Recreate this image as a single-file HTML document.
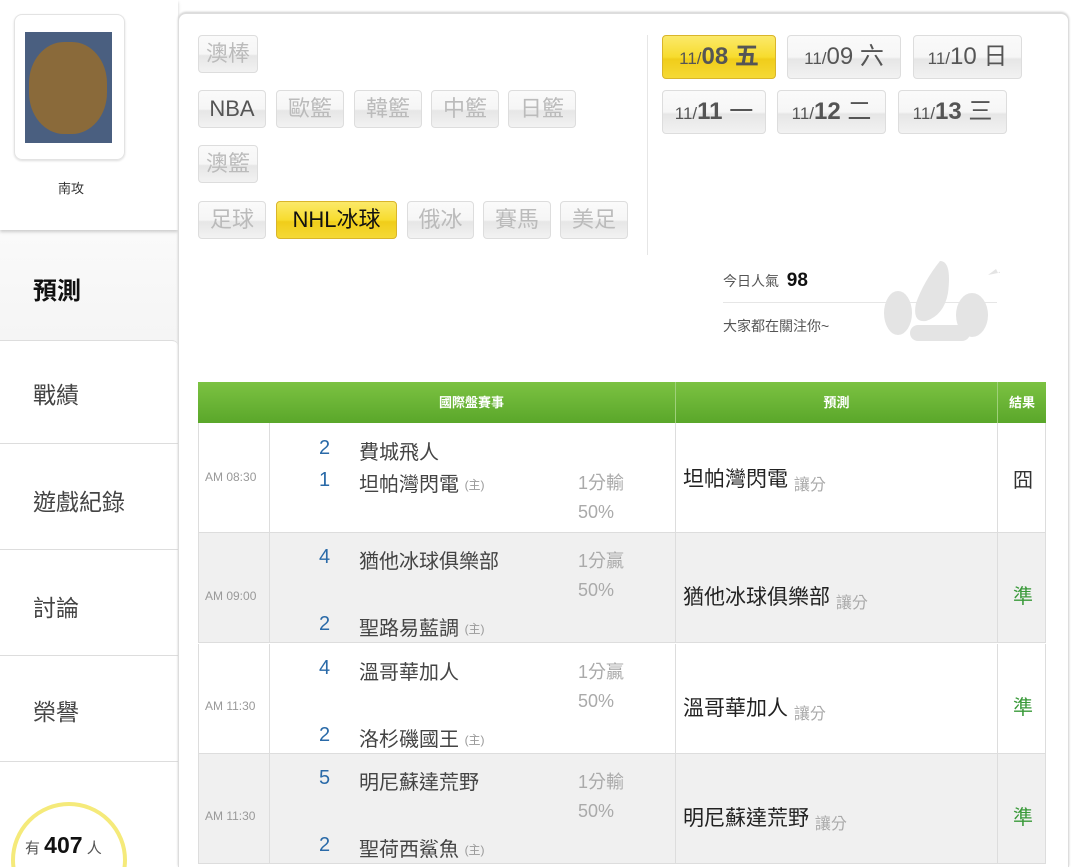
<!DOCTYPE html><html><head><meta charset="utf-8"><style>
*{box-sizing:border-box;margin:0;padding:0}
body{width:1080px;height:867px;overflow:hidden;background:#fff;font-family:"Liberation Sans","Noto Sans CJK TC",sans-serif;position:relative;color:#333}
.a{position:absolute}
.btn{position:absolute;height:38px;border:1px solid #ddd;border-radius:4px;background:linear-gradient(#fafafa,#f6f6f6 50%,#e6e6e6 55%,#f2f2f2);color:#bbb;font-size:22px;line-height:36px;text-align:center;white-space:nowrap}
.on{background:linear-gradient(#fbe96a,#f7dc2e 50%,#f0cd1a 55%,#f5d935);border-color:#d9b52a;color:#111}
.dt{height:44px;line-height:42px;color:#555;font-size:24px}
.dt small{font-size:17px}
.side{position:absolute;left:0;width:178px;background:#fff;border-bottom:1px solid #ddd;font-size:23px;color:#444;padding-left:33px}
.row{position:absolute;left:198px;width:848px;height:110px;border-bottom:1px solid #ddd;border-left:1px solid #ddd;border-right:1px solid #ddd}
.row div{position:absolute;white-space:nowrap}
.g{background:#f0f0f0}
.n{color:#2a6aa8;font-size:20px;left:120px}
.t{font-size:20px;color:#444;left:160px}
.o{font-size:18px;color:#aaa;left:379px}
.h{font-size:12px;color:#999;position:relative;top:-2px}
.tm{left:6px;font-size:12px;color:#999}
.p{left:484px;font-size:21px;color:#222}
.p span{font-size:16px;color:#aaa;position:relative;top:4px}
.r{left:814px;font-size:20px;color:#3a9a3a}
.vl{position:absolute;top:0;bottom:0;width:1px;background:#ddd}
</style></head><body>
<div class="a" style="left:0;top:230px;width:178px;height:637px;background:linear-gradient(#fafafa,#eee 40%,#f3f3f3)"></div>
<div class="a" style="left:0;top:0;width:178px;height:230px;background:#fff;box-shadow:0 2px 3px #ccc"></div>
<div class="a" style="left:14px;top:14px;width:111px;height:146px;border:1px solid #e3e3e3;border-radius:8px;box-shadow:0 1px 2px #ddd"></div>
<div class="a" style="left:25px;top:32px;width:87px;height:111px;background:#4a5f80;overflow:hidden"><div class="a" style="left:4px;top:10px;width:78px;height:92px;border-radius:45%;background:#8a6a3a"></div></div>
<div class="a" style="left:58px;top:178px;font-size:13px;color:#333">南攻</div>
<div class="a" style="left:33px;top:271px;font-size:24px;font-weight:bold;color:#111">預測</div>
<div class="side" style="top:340px;height:104px;padding-top:35px;border-top:1px solid #ddd;border-radius:0 6px 0 0">戰績</div>
<div class="side" style="top:444px;height:106px;padding-top:39px">遊戲紀錄</div>
<div class="side" style="top:550px;height:106px;padding-top:39px">討論</div>
<div class="side" style="top:656px;height:106px;padding-top:37px">榮譽</div>
<div class="side" style="top:762px;height:105px;border:none;overflow:hidden;padding:0">
<div class="a" style="left:11px;top:40px;width:116px;height:116px;border:4px solid #f5ea7a;border-radius:50%"></div>
<div class="a" style="left:25px;top:70px;font-size:15px;color:#555;white-space:nowrap">有 <b style="font-size:23px;color:#111">407</b> 人</div></div>

<div class="a" style="left:178px;top:13px;width:891px;height:854px;border:1px solid #ddd;border-bottom:none;border-radius:8px 8px 0 0;box-shadow:0 -1px 2px #ccc;background:#fff"></div>
<div class="a" style="left:647px;top:35px;width:1px;height:220px;background:#e6e6e6"></div>

<div class="btn" style="left:198px;top:35px;width:60px">澳棒</div>
<div class="btn" style="left:198px;top:90px;width:68px;color:#555">NBA</div>
<div class="btn" style="left:276px;top:90px;width:68px">歐籃</div>
<div class="btn" style="left:354px;top:90px;width:68px">韓籃</div>
<div class="btn" style="left:431px;top:90px;width:68px">中籃</div>
<div class="btn" style="left:508px;top:90px;width:68px">日籃</div>
<div class="btn" style="left:198px;top:145px;width:60px">澳籃</div>
<div class="btn" style="left:198px;top:201px;width:68px">足球</div>
<div class="btn on" style="left:276px;top:201px;width:121px">NHL冰球</div>
<div class="btn" style="left:407px;top:201px;width:67px">俄冰</div>
<div class="btn" style="left:483px;top:201px;width:68px">賽馬</div>
<div class="btn" style="left:560px;top:201px;width:68px">美足</div>

<div class="btn dt on" style="left:662px;top:35px;width:114px"><small>11/</small><b>08</b> <b>五</b></div>
<div class="btn dt" style="left:787px;top:35px;width:114px"><small>11/</small>09 六</div>
<div class="btn dt" style="left:913px;top:35px;width:109px"><small>11/</small>10 日</div>
<div class="btn dt" style="left:662px;top:90px;width:104px"><small>11/</small><b>11</b> 一</div>
<div class="btn dt" style="left:777px;top:90px;width:109px"><small>11/</small><b>12</b> 二</div>
<div class="btn dt" style="left:898px;top:90px;width:109px"><small>11/</small><b>13</b> 三</div>

<div class="a" style="left:723px;top:270px;font-size:14px;color:#555;white-space:nowrap">今日人氣 &nbsp;<b style="font-size:19px;color:#111">98</b></div>
<div class="a" style="left:723px;top:302px;width:274px;height:1px;background:#e6e6e6"></div>
<div class="a" style="left:723px;top:316px;font-size:14px;color:#555">大家都在關注你~</div>
<svg class="a" style="left:870px;top:255px" width="130" height="95"><g fill="#e4e4e4"><path d="M70 6 q12 0 8 32 q-4 22 -22 28 q-14 2 -10 -18 q8 -22 24 -42z"/><ellipse cx="28" cy="58" rx="14" ry="22"/><ellipse cx="102" cy="60" rx="16" ry="22"/><rect x="40" y="70" width="60" height="16" rx="8"/><path d="M118 20 l8 -6 l2 4z M128 18 l6 -4 l1 4z"/></g></svg>

<div class="a" style="left:198px;top:382px;width:848px;height:41px;background:linear-gradient(#7cc242,#5aa72a);color:#fff;font-size:13px;font-weight:bold;line-height:41px">
<div class="a" style="left:70px;width:407px;text-align:center">國際盤賽事</div>
<div class="a" style="left:477px;width:322px;text-align:center;border-left:1px solid #9fd07a">預測</div>
<div class="a" style="left:799px;width:49px;text-align:center;border-left:1px solid #9fd07a">結果</div>
</div>

<div class="row" style="top:423px">
<div class="vl" style="left:70px"></div><div class="vl" style="left:476px"></div><div class="vl" style="left:798px"></div>
<div class="tm" style="top:47px">AM 08:30</div>
<div class="n" style="top:14px">2</div><div class="t" style="top:13px">費城飛人</div>
<div class="n" style="top:46px">1</div><div class="t" style="top:45px">坦帕灣閃電 <span class="h">(主)</span></div>
<div class="o" style="top:46px">1分輸</div><div class="o" style="top:79px">50%</div>
<div class="p" style="top:40px">坦帕灣閃電 <span>讓分</span></div>
<div class="r" style="top:41px;color:#333">囧</div>
</div>
<div class="row g" style="top:533px">
<div class="vl" style="left:70px"></div><div class="vl" style="left:476px"></div><div class="vl" style="left:798px"></div>
<div class="tm" style="top:56px">AM 09:00</div>
<div class="n" style="top:13px">4</div><div class="t" style="top:12px">猶他冰球俱樂部</div>
<div class="n" style="top:80px">2</div><div class="t" style="top:79px">聖路易藍調 <span class="h">(主)</span></div>
<div class="o" style="top:14px">1分贏</div><div class="o" style="top:47px">50%</div>
<div class="p" style="top:48px">猶他冰球俱樂部 <span>讓分</span></div>
<div class="r" style="top:47px">準</div>
</div>
<div class="row" style="top:644px">
<div class="vl" style="left:70px"></div><div class="vl" style="left:476px"></div><div class="vl" style="left:798px"></div>
<div class="tm" style="top:55px">AM 11:30</div>
<div class="n" style="top:13px">4</div><div class="t" style="top:12px">溫哥華加人</div>
<div class="n" style="top:80px">2</div><div class="t" style="top:79px">洛杉磯國王 <span class="h">(主)</span></div>
<div class="o" style="top:14px">1分贏</div><div class="o" style="top:47px">50%</div>
<div class="p" style="top:48px">溫哥華加人 <span>讓分</span></div>
<div class="r" style="top:47px">準</div>
</div>
<div class="row g" style="top:754px">
<div class="vl" style="left:70px"></div><div class="vl" style="left:476px"></div><div class="vl" style="left:798px"></div>
<div class="tm" style="top:55px">AM 11:30</div>
<div class="n" style="top:13px">5</div><div class="t" style="top:12px">明尼蘇達荒野</div>
<div class="n" style="top:80px">2</div><div class="t" style="top:79px">聖荷西鯊魚 <span class="h">(主)</span></div>
<div class="o" style="top:14px">1分輸</div><div class="o" style="top:47px">50%</div>
<div class="p" style="top:48px">明尼蘇達荒野 <span>讓分</span></div>
<div class="r" style="top:47px">準</div>
</div>
</body></html>
